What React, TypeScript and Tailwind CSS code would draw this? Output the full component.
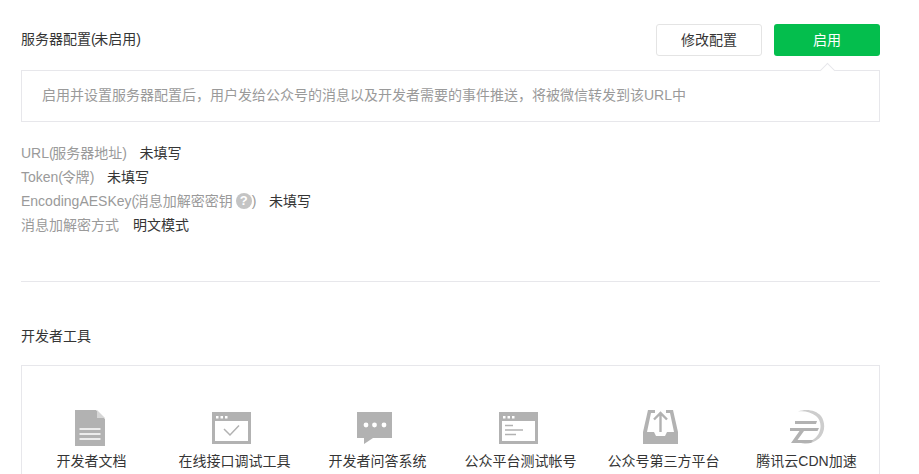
const font = "[font-family:'Liberation_Sans','Noto_Sans_CJK_SC',sans-serif]";

function P({ children }: { children: string }) {
  return <span className="tracking-[-1.4px]">{children}</span>;
}

function Row({ label, value }: { label: React.ReactNode; value: string }) {
  return (
    <div className="flex h-6 items-center leading-6">
      <span className="flex items-center text-[#9a9a9a]">{label}</span>
      <span className="ml-[14px] text-[#353535]">{value}</span>
    </div>
  );
}

function Doc() {
  return (
    <svg width="30" height="36" viewBox="0 0 30 36">
      <path d="M0 0H21L30 9V36H0Z" fill="#b2b2b2" />
      <path d="M22 0L30 8H22Z" fill="#d6d6d6" />
      <path d="M4.5 19H25.5M4.5 24H25.5M4.5 29H25.5" stroke="#fff" strokeWidth="1.6" />
    </svg>
  );
}

function WinCheck() {
  return (
    <svg width="39" height="32" viewBox="0 0 39 32">
      <path fillRule="evenodd" d="M0 0H39V32H0ZM3 9V29H36V9Z" fill="#b2b2b2" />
      <rect x="4" y="4" width="2.5" height="2.5" fill="#fff" />
      <rect x="8.5" y="4" width="2.5" height="2.5" fill="#fff" />
      <rect x="13" y="4" width="2.5" height="2.5" fill="#fff" />
      <path d="M12 17L18 23L27 13.5" fill="none" stroke="#b2b2b2" strokeWidth="1.5" />
    </svg>
  );
}

function Chat() {
  return (
    <svg width="35" height="32" viewBox="0 0 35 32">
      <path d="M0 0H35V26H16L7 32V26H0Z" fill="#b2b2b2" />
      <circle cx="9" cy="13" r="2.4" fill="#fff" />
      <circle cx="17.5" cy="13" r="2.4" fill="#fff" />
      <circle cx="27" cy="13" r="2.4" fill="#fff" />
    </svg>
  );
}

function WinText() {
  return (
    <svg width="39" height="32" viewBox="0 0 39 32">
      <path fillRule="evenodd" d="M0 0H39V32H0ZM3 9V29H36V9Z" fill="#b2b2b2" />
      <rect x="4" y="4" width="2.5" height="2.5" fill="#fff" />
      <rect x="8.5" y="4" width="2.5" height="2.5" fill="#fff" />
      <rect x="13" y="4" width="2.5" height="2.5" fill="#fff" />
      <path d="M6 13.5H14M6 18H24M6 22.5H17" stroke="#b2b2b2" strokeWidth="1.3" />
    </svg>
  );
}

function Tray() {
  return (
    <svg width="35" height="34" viewBox="0 0 35 34">
      <path d="M5 0H30L35 22V34H0V22Z" fill="#b2b2b2" />
      <path d="M8 3H27L31 22H24L22 26H13L11 22H4Z" fill="#fff" />
      <rect x="12" y="0" width="11" height="3.5" fill="#fff" />
      <path d="M17.5 3V22M11 9.5L17.5 3L24 9.5" fill="none" stroke="#b2b2b2" strokeWidth="2.4" />
    </svg>
  );
}

function Cloud() {
  return (
    <svg width="36" height="34" viewBox="0 0 36 34">
      <path d="M9 1.5C17 -1.5 27 0 32 6C37 13 36 23 30 28.5C25 33 18 34.5 12 33.5C19 33 26 30 29.5 24C33 17.5 32 10 27 6C22 2 15 0.5 9 1.5Z" fill="#cdcdcd" />
      <path d="M6 11H28L27 14H6Z" fill="#b2b2b2" />
      <path d="M1 18H30L28.5 21H15L8.5 30H24L22 33H2L10.5 21H1Z" fill="#b2b2b2" />
    </svg>
  );
}

const tools = [
  { name: "开发者文档", icon: <Doc />, cls: "mr-[3px]" },
  { name: "在线接口调试工具", icon: <WinCheck />, cls: "mr-[6px] mb-[2px]" },
  { name: "开发者问答系统", icon: <Chat />, cls: "mr-[6px] mb-[2px]" },
  { name: "公众平台测试帐号", icon: <WinText />, cls: "mr-[5px] mb-[2px]" },
  { name: "公众号第三方平台", icon: <Tray />, cls: "mr-[6px] mb-[2px]" },
  { name: "腾讯云CDN加速", icon: <Cloud />, cls: "mb-[2px]" },
];

export default function App() {
  return (
    <div className={`${font} h-[474px] w-[919px] overflow-hidden bg-white pl-[21px] pr-[39px] text-[14px] text-[#353535]`}>
      <div className="flex items-center justify-between pt-6">
        <h3 className="-mt-[2px] text-[14px] font-normal">服务器配置<P>(</P>未启用<P>)</P></h3>
        <div className="flex gap-3">
          <button className="h-8 w-[106px] rounded-[3px] border border-[#e4e4e4] bg-white text-[14px] text-[#353535]">修改配置</button>
          <button className="h-8 w-[106px] rounded-[3px] bg-[#04be4d] text-[14px] text-white">启用</button>
        </div>
      </div>

      <div className="relative mt-[14px] flex h-[52px] items-center border border-[#e7e7eb] px-5 pb-[1px] text-[#9a9a9a]">
        启用并设置服务器配置后，用户发给公众号的消息以及开发者需要的事件推送，将被微信转发到该URL中
        <span className="absolute right-[46px] top-[-6px] h-[11px] w-[11px] rotate-45 border-l border-t border-[#e7e7eb] bg-white" />
      </div>

      <div className="mt-[19px]">
        <Row label={<>URL<P>(</P>服务器地址<P>)</P></>} value="未填写" />
        <Row label={<>Token<P>(</P>令牌<P>)</P></>} value="未填写" />
        <Row
          label={
            <>
              EncodingAESKey<P>(</P>消息加解密密钥
              <span className="ml-[3px] flex h-4 w-4 items-center justify-center rounded-full bg-[#c4c4c4] text-[13px] font-bold text-white">?</span>
              <P>)</P>
            </>
          }
          value="未填写"
        />
        <Row label="消息加解密方式" value="明文模式" />
      </div>

      <hr className="mt-[44px] border-[#e7e7eb]" />

      <h3 className="mt-[44px] text-[14px] font-normal leading-5">开发者工具</h3>

      <div className="mt-[19px] h-[200px] border border-[#e7e7eb] pt-[44px]">
        <div className="-ml-[2px] grid grid-cols-[repeat(6,143px)]">
          {tools.map((t) => (
            <div key={t.name} className="flex flex-col items-center">
              <div className="flex h-[36px] items-end">
                <div className={`flex ${t.cls}`}>{t.icon}</div>
              </div>
              <div className="mt-[5px] whitespace-nowrap leading-5">{t.name}</div>
            </div>
          ))}
        </div>
      </div>
    </div>
  );
}
